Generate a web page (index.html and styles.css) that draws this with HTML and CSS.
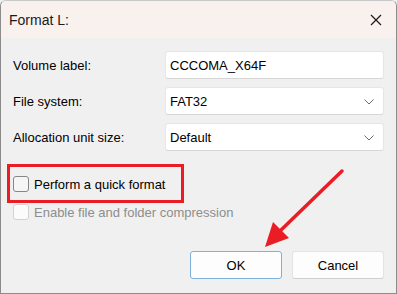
FILE: index.html
```html
<!DOCTYPE html>
<html lang="en">
  <head>
    <meta charset="UTF-8" />
    <title>Format L:</title>
    <link rel="stylesheet" href="styles.css">
  </head>
  <body>
    <div class="window">
      <div class="titlebar">
        <span class="title">Format L:</span>
        <svg class="close" width="12" height="12" viewBox="0 0 12 12">
          <path d="M1 1 L11 11 M11 1 L1 11" stroke="#1a1a1a" stroke-width="1.2" fill="none" />
        </svg>
      </div>

      <div class="content">
        <div class="form">
          <label class="label">Volume label:</label>
          <div class="field">CCCOMA_X64F</div>

          <label class="label">File system:</label>
          <div class="field select">
            <span>FAT32</span>
            <svg class="chevron" width="10" height="6" viewBox="0 0 10 6">
              <path d="M0.5 0.5 L5 5 L9.5 0.5" stroke="#6b6b6b" stroke-width="1" fill="none" />
            </svg>
          </div>

          <label class="label">Allocation unit size:</label>
          <div class="field select">
            <span>Default</span>
            <svg class="chevron" width="10" height="6" viewBox="0 0 10 6">
              <path d="M0.5 0.5 L5 5 L9.5 0.5" stroke="#6b6b6b" stroke-width="1" fill="none" />
            </svg>
          </div>
        </div>

        <div class="options">
          <div class="option">
            <span class="box"></span>
            <span>Perform a quick format</span>
          </div>
          <div class="option disabled">
            <span class="box"></span>
            <span>Enable file and folder compression</span>
          </div>
        </div>

        <div class="actions">
          <button class="btn default">OK</button>
          <button class="btn">Cancel</button>
        </div>
      </div>

      <!-- annotation overlay -->
      <div class="highlight"></div>
      <svg class="arrow" width="397" height="294" viewBox="0 0 397 294">
        <path d="M342 171 L279 232" stroke="#ea1c24" stroke-width="3.5" stroke-linecap="round" fill="none" />
        <path d="M265 247 L273 222 L289 238 Z" fill="#ea1c24" />
      </svg>
    </div>
  </body>
</html>
```

FILE: styles.css
```css
body {
  margin: 0;
  padding: 0;
  font-family: 'Liberation Sans', Arial, sans-serif;
  background-color: #f0f0f0;
}

.window {
  position: relative;
  width: 397px;
  height: 294px;
  box-sizing: border-box;
  border: 1px solid #8c8c8c;
  border-top-color: #c8c8c8;
  border-radius: 6px 6px 0 0;
  background-color: #f0f0f0;
  overflow: hidden;
}

.titlebar {
  display: flex;
  align-items: center;
  justify-content: space-between;
  height: 37px;
  padding: 0 14px 0 8px;
  background-color: #f9f1ee;
}

.title {
  font-size: 14px;
  color: #1a1a1a;
}

.content {
  padding: 13px 12px 0 12px;
}

.form {
  display: grid;
  grid-template-columns: 152px 1fr;
  row-gap: 8px;
  align-items: center;
}

.label {
  font-size: 13px;
  color: #000;
}

.field {
  display: flex;
  align-items: center;
  justify-content: space-between;
  height: 28px;
  box-sizing: border-box;
  padding: 0 9px 0 4px;
  background-color: #fff;
  border: 1px solid #e6e6e6;
  border-bottom-color: #d6d6d6;
  border-radius: 3px;
  font-size: 13px;
  color: #000;
}

.chevron {
  margin-top: 1px;
}

.options {
  display: flex;
  flex-direction: column;
  gap: 12px;
  margin-top: 25px;
}

.option {
  display: flex;
  align-items: center;
  gap: 5px;
  font-size: 13px;
  color: #000;
}

.box {
  width: 14px;
  height: 14px;
  border: 1px solid #868686;
  border-radius: 3px;
  background-color: #f6f6f6;
}

.option.disabled {
  color: #8d8d8d;
}

.option.disabled .box {
  border-color: #d2d2d2;
  background-color: #fbfbfb;
}

.actions {
  display: flex;
  justify-content: flex-end;
  gap: 10px;
  margin-top: 31px;
}

.btn {
  width: 92px;
  height: 28px;
  background-color: #fdfdfd;
  border: 1px solid #e3e3e3;
  border-bottom-color: #cfcfcf;
  border-radius: 3px;
  font-family: 'Liberation Sans', Arial, sans-serif;
  font-size: 13px;
  color: #000;
}

.btn.default {
  border-color: #7fb0db;
}

.highlight {
  position: absolute;
  left: 6px;
  top: 163px;
  width: 171px;
  height: 33px;
  border: 3px solid #ea1c24;
}

.arrow {
  position: absolute;
  left: -1px;
  top: -1px;
}
```
